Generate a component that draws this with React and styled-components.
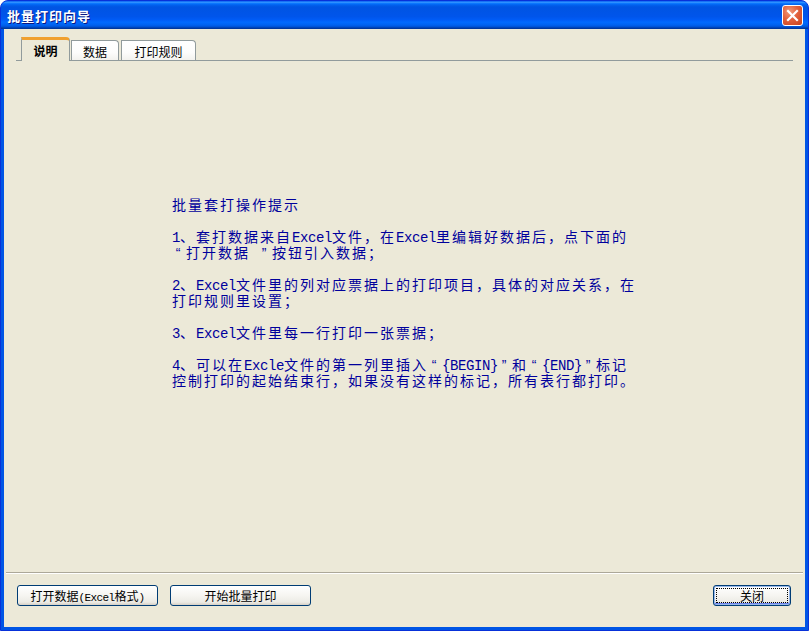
import React from "react";
import styled, { createGlobalStyle } from "styled-components";

const Global = createGlobalStyle`
  html, body { margin: 0; padding: 0; background: #ffffff; }
  body { font-family: "Noto Sans CJK SC", "Noto Sans", sans-serif; }
  * { box-sizing: border-box; }
`;

const Window = styled.div`
  width: 809px;
  height: 631px;
  display: flex;
  flex-direction: column;
  background: #0055e5;
  border: 1px solid #0831d9;
  border-radius: 8px 8px 0 0;
  overflow: hidden;
`;

const TitleBar = styled.div`
  height: 28px;
  flex: none;
  display: flex;
  align-items: center;
  justify-content: space-between;
  padding: 0 5px 0 6px;
  background: linear-gradient(
    to bottom,
    #0058ee 0%,
    #3593ff 4%,
    #288eff 6%,
    #127dff 8%,
    #036ffc 10%,
    #0262ee 14%,
    #0057e5 20%,
    #0054e3 24%,
    #0055eb 56%,
    #005bf5 66%,
    #026afe 76%,
    #0062ef 86%,
    #0052d6 92%,
    #0040ab 96%,
    #003092 100%
  );
`;

const Title = styled.div`
  color: #ffffff;
  font-family: "Noto Sans CJK SC", sans-serif;
  font-weight: 700;
  font-size: 13px;
  letter-spacing: 1px;
  text-shadow: 1px 1px 0 #0a1883;
`;

const CloseBox = styled.div`
  width: 21px;
  height: 21px;
  border: 1px solid #ffffff;
  border-radius: 3px;
  background: radial-gradient(circle at 35% 30%, #f19a7a 0%, #e2613d 45%, #c8401a 100%);
  display: flex;
  align-items: center;
  justify-content: center;
  margin-top: 1px;
`;

const Client = styled.div`
  flex: 1;
  margin: 0 3px 3px 3px;
  background: #ece9d8;
  display: flex;
  flex-direction: column;
`;

const TabRow = styled.div`
  margin: 8px 12px 0 12px;
  padding-left: 5px;
  height: 24px;
  display: flex;
  align-items: flex-end;
  border-bottom: 1px solid #919b9c;
`;

const Tab = styled.div`
  position: relative;
  height: ${(p) => (p.$active ? "24px" : "20px")};
  width: ${(p) => p.$w}px;
  margin-right: ${(p) => p.$gap}px;
  margin-bottom: ${(p) => (p.$active ? "-1px" : "0")};
  border: 1px solid #919b9c;
  border-bottom: none;
  border-radius: 0 4px 0 0;
  border-top: ${(p) => (p.$active ? "3px solid #f0a030" : "1px solid #919b9c")};
  background: ${(p) =>
    p.$active ? "#ece9d8" : "linear-gradient(to bottom, #ffffff 0%, #fdfdfc 60%, #f3f2ee 100%)"};
  z-index: ${(p) => (p.$active ? 1 : 0)};
  display: flex;
  align-items: center;
  justify-content: center;
  font-size: 12px;
  font-weight: ${(p) => (p.$active ? 700 : 400)};
  color: #000000;
  padding-top: ${(p) => (p.$active ? "0" : "1px")};
`;

const Panel = styled.div`
  flex: 1;
  display: flex;
  justify-content: center;
  padding-top: 135px;
`;

const Notes = styled.div`
  width: 465px;
  color: #00009c;
  font-family: "Noto Sans CJK SC", "Noto Sans", sans-serif;
  font-size: 14px;
  line-height: 16px;
  letter-spacing: 2px;
`;

const Line = styled.div`
  white-space: pre;
  height: 16px;
`;

const Mono = styled.span`
  font-family: "Liberation Mono", "DejaVu Sans Mono", monospace;
  font-size: ${(p) => p.$size}px;
  letter-spacing: ${(p) => p.$track}px;
`;

const Quote = styled.span`
  display: inline-block;
  width: 14px;
  text-align: center;
  font-family: "Liberation Sans", sans-serif;
`;

const Separator = styled.div`
  margin: 0 2px;
  height: 2px;
  border-top: 1px solid #aca899;
  border-bottom: 1px solid #ffffff;
`;

const Footer = styled.div`
  display: flex;
  align-items: center;
  gap: 12px;
  padding: 11px 14px 21px 13px;
`;

const Spacer = styled.div`
  flex: 1;
`;

const Button = styled.button`
  width: ${(p) => p.$w}px;
  height: 21px;
  padding: 0;
  border: 1px solid #003c74;
  border-radius: 3px;
  background: linear-gradient(to bottom, #ffffff 0%, #f6f5f1 50%, #ecebe5 85%, #d6d0c5 100%);
  font-family: "Noto Sans CJK SC", sans-serif;
  font-size: 12px;
  color: #000000;
  line-height: 19px;
  white-space: pre;
  ${(p) =>
    p.$default &&
    `
    box-shadow: inset 0 0 0 1px #98b8ea, inset 0 -1px 0 1px #6982ee;
    outline: 1px dotted #000000;
    outline-offset: -4px;
  `}
`;

const notes = [
  "批量套打操作提示",
  "",
  "1、套打数据来自Excel文件，在Excel里编辑好数据后，点下面的",
  "“打开数据 ”按钮引入数据；",
  "",
  "2、Excel文件里的列对应票据上的打印项目，具体的对应关系，在",
  "打印规则里设置；",
  "",
  "3、Excel文件里每一行打印一张票据；",
  "",
  "4、可以在Excle文件的第一列里插入“{BEGIN}”和“{END}”标记",
  "控制打印的起始结束行，如果没有这样的标记，所有表行都打印。",
];

function renderRuns(text, monoSize, track) {
  const parts = text.match(/[\x20-\x7e]+|[“”]|[^\x20-\x7e“”]+/g) || [];
  return parts.map((p, i) => {
    if (p === "“" || p === "”") return <Quote key={i}>{p}</Quote>;
    if (/^[\x20-\x7e]+$/.test(p))
      return (
        <Mono key={i} $size={monoSize} $track={track}>
          {p}
        </Mono>
      );
    return <React.Fragment key={i}>{p}</React.Fragment>;
  });
}

export default function App() {
  return (
    <>
      <Global />
      <Window>
        <TitleBar>
          <Title>批量打印向导</Title>
          <CloseBox>
            <svg width="13" height="13" viewBox="0 0 13 13">
              <path d="M2 2 L11 11 M11 2 L2 11" stroke="#ffffff" strokeWidth="2.2" strokeLinecap="square" />
            </svg>
          </CloseBox>
        </TitleBar>
        <Client>
          <TabRow>
            <Tab $active $w={49} $gap={1}>说明</Tab>
            <Tab $w={48} $gap={2}>数据</Tab>
            <Tab $w={75} $gap={0}>打印规则</Tab>
          </TabRow>
          <Panel>
            <Notes>
              {notes.map((t, i) => (
                <Line key={i}>{renderRuns(t, 14, -0.4)}</Line>
              ))}
            </Notes>
          </Panel>
          <Separator />
          <Footer>
            <Button $w={141}>{renderRuns("打开数据(Excel格式)", 11, -0.6)}</Button>
            <Button $w={141}>开始批量打印</Button>
            <Spacer />
            <Button $w={78} $default>关闭</Button>
          </Footer>
        </Client>
      </Window>
    </>
  );
}
